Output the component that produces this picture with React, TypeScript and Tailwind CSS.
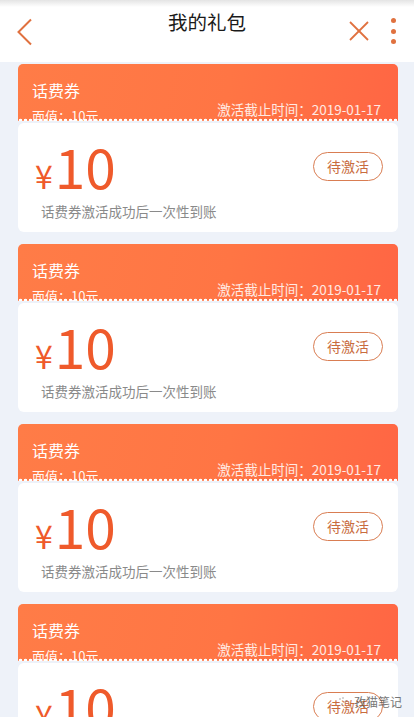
import React from "react";

const cards = [0, 1, 2, 3];

function Coupon() {
  return (
    <div className="flex flex-col">
      <div className="relative h-[57px] overflow-hidden rounded-t-[5px] bg-[linear-gradient(100deg,#ff7c47_0%,#ff7544_55%,#ff6644_100%)] px-[14px] pt-[16px] text-white">
        <div className="text-[16px] leading-[20px]">话费券</div>
        <div className="mt-[1px] flex items-start justify-between">
          <div className="mt-[7px] text-[13px] leading-[16px] text-white/95">面值：10元</div>
          <div className="mr-[3px] text-[13.5px] leading-[16px] text-white/85">激活截止时间：2019-01-17</div>
        </div>
        <div className="absolute bottom-[-2px] left-0 right-0 h-[5px] bg-[radial-gradient(circle,#ffffff_1.6px,transparent_2.1px)] bg-[length:5px_5px] bg-repeat-x" />
      </div>
      <div className="mt-[2px] flex h-[109px] flex-col rounded-[6px] bg-white px-[15px] pt-[15px]">
        <div className="flex items-start justify-between">
          <div className="flex items-baseline pl-[2px] text-[#ef5a2b]">
            <span className="text-[32px] leading-[54px]">¥</span>
            <span className="ml-[2px] text-[55px] leading-[54px]">10</span>
          </div>
          <div className="mt-[14px] flex h-[29px] w-[70px] items-center justify-center rounded-full border border-[#d97d52] text-[14px] text-[#c96c3e]">
            待激活
          </div>
        </div>
        <div className="-mt-[1px] pl-[8px] text-[13.5px] leading-[20px] text-[#8a8a8a]">话费券激活成功后一次性到账</div>
      </div>
    </div>
  );
}

export default function App() {
  return (
    <div className="relative h-[717px] w-[414px] overflow-hidden bg-[#eef2f9] font-['Noto_Sans_CJK_SC','Noto_Sans',sans-serif]">
      <div className="relative flex h-[62px] items-center justify-center bg-[linear-gradient(to_bottom,#e4e4e4_0px,#ffffff_7px)]">
        <svg className="absolute left-[16px] top-[18px]" width="18" height="28" viewBox="0 0 18 28">
          <polyline points="15,1.5 2.5,14 15,26.5" fill="none" stroke="#e0713f" strokeWidth="2" />
        </svg>
        <div className="-mt-[18px] text-[19.5px] leading-[24px] text-[#1a1a1a]">我的礼包</div>
        <svg className="absolute left-[348px] top-[20px]" width="22" height="22" viewBox="0 0 22 22">
          <line x1="2" y1="2" x2="20" y2="20" stroke="#e0713f" strokeWidth="1.8" />
          <line x1="20" y1="2" x2="2" y2="20" stroke="#e0713f" strokeWidth="1.8" />
        </svg>
        <div className="absolute left-[391px] top-[18px] flex flex-col gap-[5.5px]">
          <div className="h-[5px] w-[5px] rounded-full bg-[#e0713f]" />
          <div className="h-[5px] w-[5px] rounded-full bg-[#e0713f]" />
          <div className="h-[5px] w-[5px] rounded-full bg-[#e0713f]" />
        </div>
      </div>
      <div className="flex flex-col gap-[12px] pl-[18px] pr-[16px] pt-[2px]">
        {cards.map((i) => (
          <Coupon key={i} />
        ))}
      </div>
      <div className="absolute bottom-[8px] right-[12px] flex items-center gap-[2px] text-[12px] leading-[14px] text-[#555] opacity-80">
        <svg width="16" height="14" viewBox="0 0 16 14">
          <circle cx="4" cy="4" r="0.8" fill="#888" />
          <circle cx="7" cy="3" r="0.8" fill="#888" />
          <circle cx="10" cy="6" r="0.8" fill="#888" />
          <circle cx="6" cy="9" r="0.8" fill="#888" />
        </svg>
        <span>孜猫笔记</span>
      </div>
    </div>
  );
}
